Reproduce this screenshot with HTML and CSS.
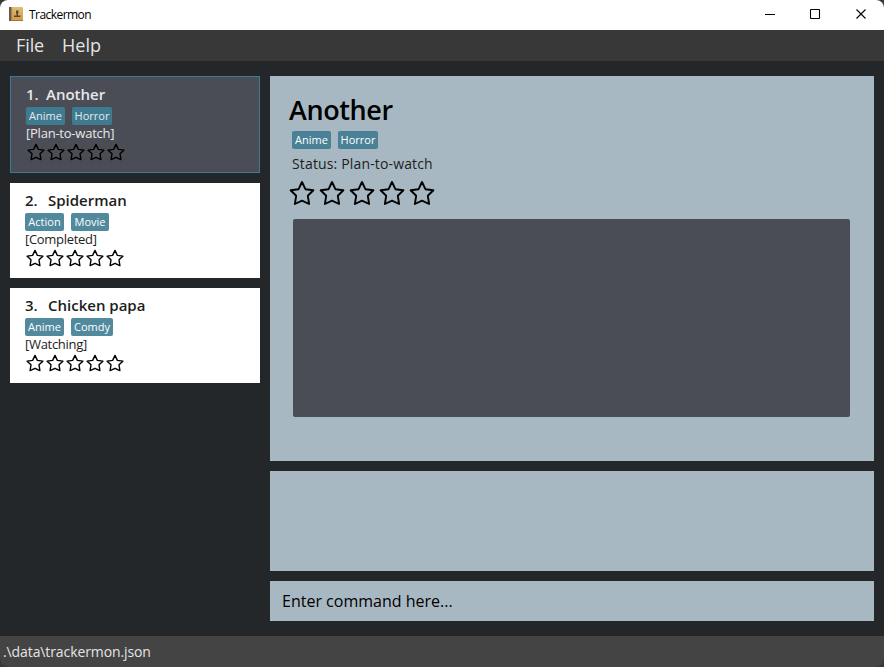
FILE: index.html
```html
<!DOCTYPE html>
<html lang="en">
<head>
<meta charset="utf-8">
<title>Trackermon</title>
<link rel="stylesheet" href="styles.css">
</head>
<body>
<svg width="0" height="0" class="defs"><defs>
<symbol id="star" viewBox="0 0 26 26"><path d="M13 2 L16.4 9.2 L24.4 10.3 L18.8 15.7 L20.1 24 L13 20.6 L5.9 24 L7.2 15.7 L1.6 10.3 L9.6 9.2 Z"/></symbol>
</defs></svg>
<div class="window">
<header class="titlebar">
<svg class="app-icon" width="14" height="14" viewBox="0 0 14 14"><defs><linearGradient id="gold" x1="0" y1="0" x2="0" y2="1"><stop offset="0" stop-color="#e0bd78"/><stop offset="1" stop-color="#cf9c40"/></linearGradient></defs><rect width="14" height="14" rx="1" fill="url(#gold)"/><path d="M0 0H2.2V14H0Z" fill="#6b5848"/><path d="M2.2 0H3.2V14H2.2Z" fill="#a88350"/><path d="M3 13H14V14H3Z" fill="#a7782d"/><path d="M7 3.5H9.4V6.3L8.9 6.8V8.4H11.4V10H5V8.4H7.5V6.8L7 6.3Z" fill="#57452f"/></svg>
<span class="app-name">Trackermon</span>
<svg class="controls" width="104" height="12" viewBox="0 0 104 12"><path d="M1 6.5H11" fill="none" stroke="#000"/><rect x="46.5" y="1.5" width="9" height="9" rx="0.5" fill="none" stroke="#000" stroke-width="1.1"/><path d="M92.5 1.5L101.5 10.5M101.5 1.5L92.5 10.5" fill="none" stroke="#000" stroke-width="1.1"/></svg>
</header>
<nav class="menu"><span class="file">File</span><span class="help">Help</span></nav>
<main class="content">
<section class="list">
<article class="card selected"><h2><span class="num">1.</span><span>Another</span></h2><div class="tags"><span class="tag w39">Anime</span><span class="tag w40">Horror</span></div><p class="roomy">[Plan-to-watch]</p><div class="stars"><svg><use href="#star"/></svg><svg><use href="#star"/></svg><svg><use href="#star"/></svg><svg><use href="#star"/></svg><svg><use href="#star"/></svg></div></article>
<article class="card"><h2><span class="num wide">2.</span><span>Spiderman</span></h2><div class="tags"><span class="tag w39">Action</span><span class="tag w38">Movie</span></div><p>[Completed]</p><div class="stars"><svg><use href="#star"/></svg><svg><use href="#star"/></svg><svg><use href="#star"/></svg><svg><use href="#star"/></svg><svg><use href="#star"/></svg></div></article>
<article class="card"><h2><span class="num wide">3.</span><span>Chicken papa</span></h2><div class="tags"><span class="tag w39">Anime</span><span class="tag w42">Comdy</span></div><p>[Watching]</p><div class="stars"><svg><use href="#star"/></svg><svg><use href="#star"/></svg><svg><use href="#star"/></svg><svg><use href="#star"/></svg><svg><use href="#star"/></svg></div></article>
</section>
<section class="side">
<article class="panel detail"><h1>Another</h1><div class="tags"><span class="tag w39">Anime</span><span class="tag w40">Horror</span></div><p class="status">Status: Plan-to-watch</p><div class="stars large"><svg><use href="#star"/></svg><svg><use href="#star"/></svg><svg><use href="#star"/></svg><svg><use href="#star"/></svg><svg><use href="#star"/></svg></div><div class="comments"></div></article>
<div class="panel result"></div>
<div class="panel command">Enter command here...</div>
</section>
</main>
<footer class="footer">.\data\trackermon.json</footer>
</div>
</body>
</html>
```
FILE: styles.css
```css
* { box-sizing: border-box; margin: 0; padding: 0; }
body { width: 884px; height: 667px; overflow: hidden; background: #383838; font-family: "Open Sans", "Noto Sans", sans-serif; white-space: nowrap; }
.defs { position: absolute; }
.window { height: 667px; display: flex; flex-direction: column; border-radius: 8px; overflow: hidden; background: #23272a; }
.titlebar { height: 30px; background: #fff; display: flex; align-items: center; padding: 0 17px 0 9px; }
.app-icon { margin-top: -2px; }
.app-name { font-size: 12px; line-height: 16px; margin-left: 6px; letter-spacing: -0.55px; color: #000; }
.controls { margin: -2px -1px 0 auto; }
.menu { height: 31px; background: #383838; color: #e4e4e4; font-size: 18px; line-height: 31px; padding-left: 16px; display: flex; }
.file { width: 46px; letter-spacing: -0.1px; }
.content { height: 575px; display: flex; gap: 10px; padding: 15px 10px; }
.list { width: 250px; display: flex; flex-direction: column; gap: 10px; }
.card { height: 95px; background: #fff; color: #1d1d1d; padding: 6px 15px 0; }
.card.selected { height: 97px; background: #4a4d55; border: 1px solid #3e7b91; color: #e8e8e8; }
h2 { height: 24px; display: flex; font-size: 15px; line-height: 22px; font-weight: 600; }
.num { width: 20px; }
.num.wide { width: 23px; }
.tags { display: flex; gap: 7px; height: 18px; }
.tag { background: #518a9c; color: #fff; border-radius: 2px; font-size: 11px; font-weight: 500; line-height: 18px; height: 18px; text-align: center; }
.selected .tag { background: #3e7b91; color: #e8e8e8; }
.w38 { width: 38px; }
.w39 { width: 39px; }
.w40 { width: 40px; }
.w42 { width: 42px; }
.card p { font-size: 13px; line-height: 16px; height: 18px; letter-spacing: -0.3px; }
.card .roomy { letter-spacing: -0.23px; }
.stars { display: flex; gap: 2px; padding-left: 1px; }
.stars svg { width: 18px; height: 18px; fill: none; stroke: #000; stroke-width: 2; stroke-linejoin: round; }
.side { width: 604px; display: flex; flex-direction: column; gap: 10px; }
.panel { background: #a8b8c2; }
.detail { height: 385px; padding: 16px 23px 0; }
h1 { height: 39px; margin-left: -4px; font-size: 27px; line-height: 36px; font-weight: 600; color: #000; letter-spacing: -0.4px; }
.detail .tags { margin-left: -1px; }
.detail .tag { background: #4a8197; }
.status { font-size: 14px; line-height: 30px; height: 30px; margin-left: -1px; color: #1d1d1d; letter-spacing: 0.15px; }
.stars.large { gap: 4px; margin-left: -5px; height: 40px; }
.stars.large svg { width: 26px; height: 26px; margin-top: 1px; stroke-width: 1.9; }
.comments { width: 557px; height: 198px; border-radius: 2px; background: #4a4d55; }
.result { height: 100px; }
.command { height: 40px; padding-left: 12px; font-size: 16px; line-height: 40px; color: #000; }
.footer { height: 31px; background: #444; color: #e4e4e4; padding-left: 3px; font-size: 14px; line-height: 31px; letter-spacing: -0.1px; }
```
